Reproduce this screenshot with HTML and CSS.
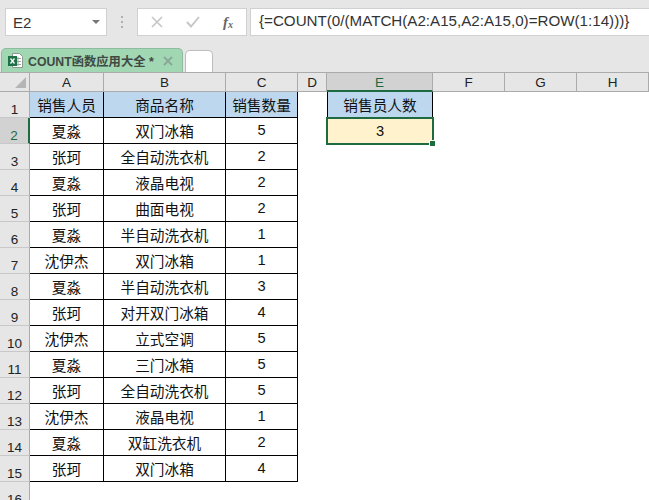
FILE: index.html
```html
<!DOCTYPE html>
<html lang="zh">
<head>
<meta charset="utf-8">
<title>COUNT函数应用大全</title>
<link rel="stylesheet" href="styles.css">
</head>
<body>
<div class="top">
  <div class="formula-row">
    <div class="namebox"><span>E2</span><i class="caret"></i></div>
    <div class="grip"><b></b><b></b><b></b></div>
    <div class="fx-buttons">
      <svg class="ic" width="12" height="12" viewBox="0 0 12 12"><path d="M1 1l10 10M11 1L1 11" stroke="#c6c6c6" stroke-width="1.6" fill="none"/></svg>
      <svg class="ic" width="14" height="12" viewBox="0 0 14 12"><path d="M1 6l4 4.500 8-9.500" stroke="#c6c6c6" stroke-width="1.900" fill="none"/></svg>
      <span class="fx">f<sub>x</sub></span>
    </div>
    <div class="formula">{=COUNT(0/(MATCH(A2:A15,A2:A15,0)=ROW(1:14)))}</div>
  </div>
  <div class="tabs">
    <div class="tab">
      <svg class="xl" width="17" height="17" viewBox="0 0 17 17"><path d="M5.500 1.500h7l3 3v11h-10z" fill="#fff" stroke="#8a9a90"/><path d="M8 6.500h6M8 9.500h6M8 12.500h6M11 5v9" stroke="#9aa59e" fill="none"/><rect x="1" y="4" width="9" height="10" fill="#1e7145"/><path d="M3.500 6.500l4 5M7.500 6.500l-4 5" stroke="#fff" stroke-width="1.300"/></svg>
      <span class="tab-name">COUNT函数应用大全 *</span>
      <svg class="tab-x" width="10" height="10" viewBox="0 0 10 10"><path d="M1 1l8 8M9 1L1 9" stroke="#8aa797" stroke-width="1.800" fill="none"/></svg>
    </div>
    <div class="tab-new"></div>
  </div>
</div>
<div class="sheet">
  <div class="corner"><i></i></div><div class="ch">A</div><div class="ch">B</div><div class="ch">C</div><div class="ch">D</div><div class="ch on">E</div><div class="ch">F</div><div class="ch">G</div><div class="ch">H</div>

  <div class="rh">1</div><div class="c head">销售人员</div><div class="c head">商品名称</div><div class="c head">销售数量</div><div class="blank"></div><div class="c head e1">销售员人数</div><div class="blank s3"></div>
  <div class="rh on">2</div><div class="c">夏淼</div><div class="c">双门冰箱</div><div class="c">5</div><div class="blank"></div><div class="c sel">3<i class="handle"></i></div><div class="blank s3"></div>
  <div class="rh">3</div><div class="c">张珂</div><div class="c">全自动洗衣机</div><div class="c">2</div><div class="blank s5"></div>
  <div class="rh">4</div><div class="c">夏淼</div><div class="c">液晶电视</div><div class="c">2</div><div class="blank s5"></div>
  <div class="rh">5</div><div class="c">张珂</div><div class="c">曲面电视</div><div class="c">2</div><div class="blank s5"></div>
  <div class="rh">6</div><div class="c">夏淼</div><div class="c">半自动洗衣机</div><div class="c">1</div><div class="blank s5"></div>
  <div class="rh">7</div><div class="c">沈伊杰</div><div class="c">双门冰箱</div><div class="c">1</div><div class="blank s5"></div>
  <div class="rh">8</div><div class="c">夏淼</div><div class="c">半自动洗衣机</div><div class="c">3</div><div class="blank s5"></div>
  <div class="rh">9</div><div class="c">张珂</div><div class="c">对开双门冰箱</div><div class="c">4</div><div class="blank s5"></div>
  <div class="rh">10</div><div class="c">沈伊杰</div><div class="c">立式空调</div><div class="c">5</div><div class="blank s5"></div>
  <div class="rh">11</div><div class="c">夏淼</div><div class="c">三门冰箱</div><div class="c">5</div><div class="blank s5"></div>
  <div class="rh">12</div><div class="c">张珂</div><div class="c">全自动洗衣机</div><div class="c">5</div><div class="blank s5"></div>
  <div class="rh">13</div><div class="c">沈伊杰</div><div class="c">液晶电视</div><div class="c">1</div><div class="blank s5"></div>
  <div class="rh">14</div><div class="c">夏淼</div><div class="c">双缸洗衣机</div><div class="c">2</div><div class="blank s5"></div>
  <div class="rh">15</div><div class="c">张珂</div><div class="c">双门冰箱</div><div class="c">4</div><div class="blank s5"></div>
  <div class="rh">16</div><div class="blank s8"></div>
</div>
</body>
</html>
```
FILE: styles.css
```css
* { box-sizing: border-box; }
html, body { margin: 0; height: 100%; overflow: hidden; background: #fff; }
body { font-family: "Liberation Sans", "Noto Sans CJK SC", sans-serif; color: #111; width: 649px; height: 500px; }

.top { height: 73px; background: #e6e6e6; display: flex; flex-direction: column; border-bottom: 1px solid #ababab; }
.formula-row { display: flex; align-items: stretch; height: 28px; margin-top: 8px; padding-left: 5px; }
.namebox { width: 102px; background: #fff; border: 1px solid #d0d0d0; display: flex; align-items: center; justify-content: space-between; padding: 0 6px 0 7px; font-size: 15px; color: #333; }
.caret { width: 0; height: 0; border-left: 4px solid transparent; border-right: 4px solid transparent; border-top: 4px solid #777; }
.grip { width: 30px; display: flex; flex-direction: column; align-items: center; justify-content: center; gap: 3px; }
.grip b { width: 2px; height: 2px; background: #b0b0b0; }
.fx-buttons { width: 110px; background: #fff; border: 1px solid #d0d0d0; display: flex; align-items: center; padding-left: 13px; gap: 23px; }
.fx { font-family: "Liberation Serif", serif; font-style: italic; font-weight: bold; font-size: 15px; color: #666; line-height: 1; }
.fx sub { font-size: 10px; vertical-align: -1px; line-height: 0; }
.formula { flex: 1; margin-left: 3px; background: #fff; border: 1px solid #d0d0d0; border-right: 0; padding-left: 8px; font-size: 15.170px; line-height: 24px; color: #333; white-space: nowrap; }

.tabs { display: flex; align-items: flex-end; margin-top: auto; padding-left: 1px; gap: 2px; }
.tab { width: 182px; height: 24px; background: #a2d7b3; border: 1px solid #8fbba0; border-bottom: 0; border-radius: 5px 5px 0 0; display: flex; align-items: center; padding-left: 5px; color: #444; }
.xl { flex: none; }
.tab-name { font-size: 12.300px; font-weight: bold; margin-left: 4px; white-space: nowrap; color: #3f4a44; }
.tab-x { margin-left: 9px; flex: none; }
.tab-new { width: 28px; height: 22px; background: #fff; border: 1px solid #bdbdbd; border-bottom: 0; border-radius: 5px 5px 0 0; }

.sheet { display: grid; grid-template-columns: 30px 74px 122px 72px 29px 106px 72px 72px 72px; grid-template-rows: 19px; grid-auto-rows: 26px; }
.corner { background: #e6e6e6; border-right: 1px solid #ababab; border-bottom: 1px solid #ababab; position: relative; }
.corner i { position: absolute; right: 3px; bottom: 3px; width: 0; height: 0; border-left: 11px solid transparent; border-bottom: 11px solid #b5b5b5; }
.ch { background: #e6e6e6; border-right: 1px solid #ababab; border-bottom: 1px solid #ababab; font-size: 13.500px; line-height: 19px; text-align: center; color: #222; }
.ch.on { background: #d2d2d2; color: #1e6b41; border-bottom: 2px solid #1e6b41; }
.rh { background: #e6e6e6; border-right: 1px solid #ababab; border-bottom: 1px solid #c8c8c8; font-size: 13.500px; text-align: center; color: #222; padding-top: 9px; line-height: 17px; }
.rh.on { background: #d2d2d2; color: #1e6b41; border-right: 2px solid #1e6b41; }
.c { border-right: 1px solid #000; border-bottom: 1px solid #000; font-size: 14.670px; display: flex; align-items: center; justify-content: center; color: #111; padding-bottom: 1px; }
.head { background: #bdd7ee; }
.e1 { border-left: 1px solid #000; }
.sel { background: #fff2cc; position: relative; outline: 2px solid #1e6b41; outline-offset: -1px; border: 0; }
.handle { position: absolute; right: -2px; bottom: -2px; width: 5px; height: 5px; background: #1e6b41; box-shadow: 0 0 0 1px #fff; }
.s3 { grid-column: span 3; }
.s5 { grid-column: span 5; }
.s8 { grid-column: span 8; }
```
